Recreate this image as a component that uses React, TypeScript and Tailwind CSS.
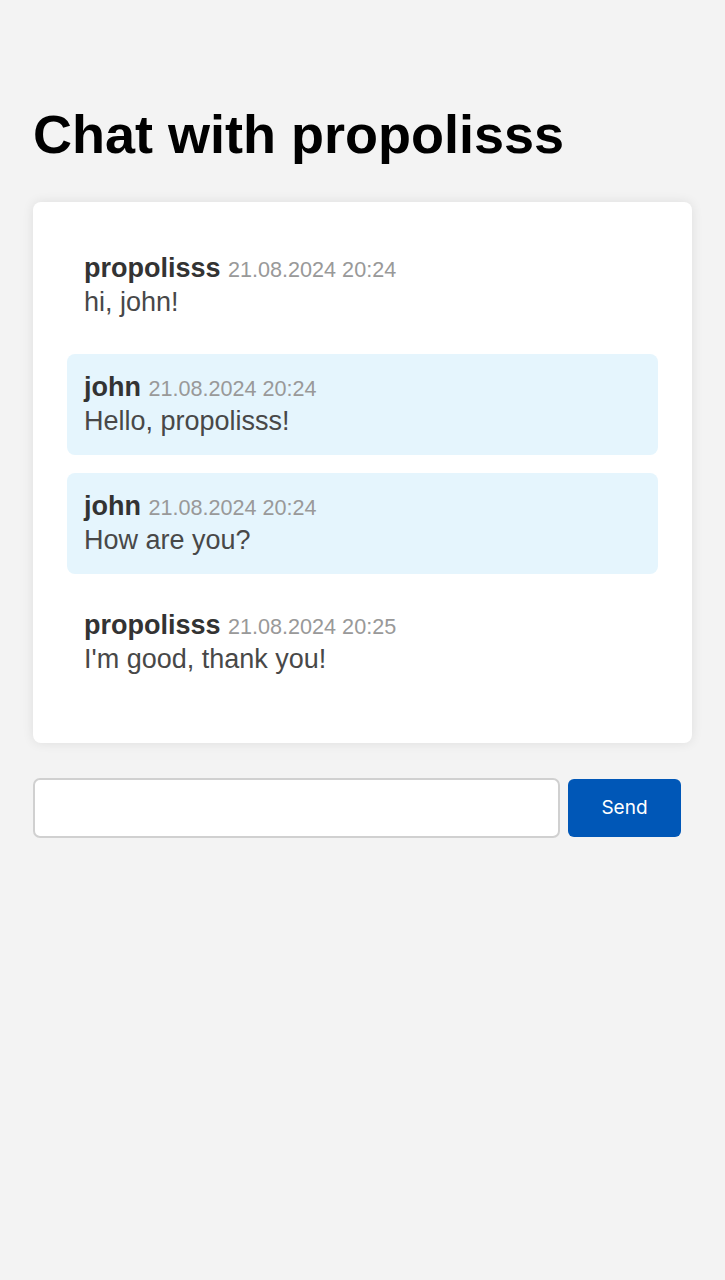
import React, { useState } from "react";

type Message = {
  author: string;
  time: string;
  text: string;
  own: boolean;
};

const messages: Message[] = [
  { author: "propolisss", time: "21.08.2024 20:24", text: "hi, john!", own: false },
  { author: "john", time: "21.08.2024 20:24", text: "Hello, propolisss!", own: true },
  { author: "john", time: "21.08.2024 20:24", text: "How are you?", own: true },
  { author: "propolisss", time: "21.08.2024 20:25", text: "I'm good, thank you!", own: false },
];

const App = () => {
  const [draft, setDraft] = useState("");

  return (
    <div
      className="min-h-[1280px] bg-[#f3f3f3] px-[33px] pt-[104px]"
      style={{ fontFamily: '"Liberation Sans", Arial, sans-serif' }}
    >
      <h1 className="text-[54px] font-bold leading-[60px] text-black mb-[38px]">
        Chat with propolisss
      </h1>

      <div className="bg-white rounded-[8px] shadow-[0_0_12px_rgba(0,0,0,0.09)] px-[34px] pt-[33px] pb-[32px]">
        {messages.map((m, i) => (
          <div
            key={i}
            className={`rounded-[8px] px-[17px] py-[17px] mb-[18px] text-[27px] leading-[33.5px] ${
              m.own ? "bg-[#e5f5fd]" : ""
            }`}
          >
            <div>
              <span className="font-bold text-[#333]">{m.author} </span>
              <span className="text-[21.6px] leading-none text-[#999]">{m.time}</span>
            </div>
            <div className="text-[#484848]">{m.text}</div>
          </div>
        ))}
      </div>

      <div className="flex items-center gap-[8px] mt-[35px]">
        <input
          value={draft}
          onChange={(e) => setDraft(e.target.value)}
          className="w-[527px] h-[60px] bg-white border-2 border-[#d0d0d0] rounded-[7px] px-3 outline-none"
        />
        <button
          className="w-[113px] h-[58px] bg-[#0057b7] text-white rounded-[6px] text-[19px]"
          style={{ fontFamily: "Inter, sans-serif" }}
        >
          Send
        </button>
      </div>
    </div>
  );
};

export default App;
